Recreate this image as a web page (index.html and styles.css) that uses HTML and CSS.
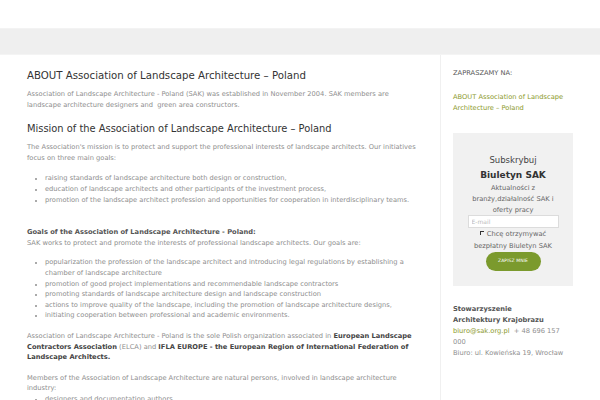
FILE: index.html
```html
<!DOCTYPE html>
<html lang="pl">
<head>
<meta charset="utf-8">
<link rel="stylesheet" href="styles.css">
</head>
<body>
<div class="top"></div>
<div class="band"></div>
<div class="page">
  <main class="content">
    <h1 class="title">ABOUT Association of Landscape Architecture – Poland</h1>
    <p class="para">Association of Landscape Architecture - Poland (SAK) was established in November 2004. SAK members are landscape architecture designers and &nbsp;green area constructors.</p>
    <h2 class="title title-2">Mission of the Association of Landscape Architecture – Poland</h2>
    <p class="para">The Association's mission is to protect and support the professional interests of landscape architects. Our initiatives focus on three main goals:</p>
    <ul class="list">
      <li>raising standards of landscape architecture both design or construction,</li>
      <li>education of landscape architects and other participants of the investment process,</li>
      <li>promotion of the landscape architect profession and opportunities for cooperation in interdisciplinary teams.</li>
    </ul>
    <p class="para goals"><strong>Goals of the Association of Landscape Architecture - Poland:</strong><br>SAK works to protect and promote the interests of professional landscape architects. Our goals are:</p>
    <ul class="list">
      <li>popularization the profession of the landscape architect and introducing legal regulations by establishing a chamber of landscape architecture</li>
      <li>promotion of good project implementations and recommendable landscape contractors</li>
      <li>promoting standards of landscape architecture design and landscape construction</li>
      <li>actions to improve quality of the landscape, including the promotion of landscape architecture designs,</li>
      <li>initiating cooperation between professional and academic environments.</li>
    </ul>
    <p class="para">Association of Landscape Architecture - Poland is the sole Polish organization associated in <strong>European Landscape Contractors Association</strong> (ELCA) and <strong>IFLA EUROPE - the European Region of International Federation of Landscape Architects.</strong></p>
    <p class="para">Members of the Association of Landscape Architecture are natural persons, involved in landscape architecture industry:</p>
    <ul class="list list-tight">
      <li>designers and documentation authors</li>
    </ul>
  </main>
  <aside class="sidebar">
    <div class="widget-title">ZAPRASZAMY NA:</div>
    <a class="side-link" href="#">ABOUT Association of Landscape Architecture – Poland</a>
    <div class="newsletter">
      <div class="nl-sub">Subskrybuj</div>
      <div class="nl-name">Biuletyn SAK</div>
      <div class="nl-desc">Aktualności z branży,działalność SAK i oferty pracy</div>
      <input class="nl-input" type="text" placeholder="E-mail">
      <label class="nl-check"><span class="box"></span>Chcę otrzymywać bezpłatny Biuletyn SAK</label>
      <button class="nl-btn" type="button">ZAPISZ MNIE</button>
    </div>
    <div class="contact">
      <strong>Stowarzyszenie<br>Architektury Krajobrazu</strong><br>
      <a class="mail" href="#">biuro@sak.org.pl</a> &nbsp;+ 48 696 157 000<br>
      Biuro: ul. Kowieńska 19, Wrocław
    </div>
  </aside>
</div>
</body>
</html>
```
FILE: styles.css
```css
* { box-sizing: border-box; }
html, body { margin: 0; padding: 0; background: #fff; }
body {
  font-family: "DejaVu Sans", Verdana, sans-serif;
  color: #8e8e8e;
  font-size: 6.7px;
  line-height: 10.6px;
  overflow: hidden;
  height: 400px;
}
.top { height: 28px; background: #fff; }
.band {
  height: 27px;
  background: #efefef;
  border-top: 1px solid #f3f3f3;
  border-bottom: 1px solid #f4f4f4;
}
.page {
  display: grid;
  grid-template-columns: 440px 160px;
}
.content { padding: 13px 22px 0 27px; }
.title {
  margin: 0;
  font-size: 10.2px;
  line-height: 16px;
  font-weight: normal;
  color: #333;
}
.para { margin: 0; }
.title + .para { margin-top: 5px; }
.para + .title-2 { margin-top: 11px; font-size: 9.9px; }
.title-2 + .para { margin-top: 5px; }
.list {
  margin: 10px 0 0;
  padding-left: 18px;
  list-style: disc;
  line-height: 10.6px;
}
.list li::marker { font-size: 5px; }
.list + .para { margin-top: 10px; }
.para + .para { margin-top: 10px; }
.list + .goals { margin-top: 22px; }
.goals + .list { margin-top: 9px; }
.goals strong { color: #555; }
.para + .list-tight { margin-top: 0; }
strong { color: #444; font-weight: bold; }
.sidebar {
  border-left: 1px solid #f0f0f0;
  padding: 13px 27px 0 12px;
}
.widget-title { color: #555; line-height: 11px; }
.side-link {
  display: block;
  margin-top: 13px;
  color: #8c9a2c;
  text-decoration: none;
  line-height: 11px;
}
.newsletter {
  margin-top: 19px;
  width: 120px;
  background: #f1f1f1;
  padding: 20px 12px 15px;
  display: flex;
  flex-direction: column;
  align-items: center;
  text-align: center;
}
.nl-sub { font-size: 8.5px; color: #444; line-height: 14px; }
.nl-name { font-size: 9px; font-weight: bold; color: #333; line-height: 16px; }
.nl-desc { color: #666; line-height: 11px; padding: 0 4px; }
.nl-input {
  margin-top: -1px;
  width: 91px;
  height: 13px;
  border: 1px solid #dcdcdc;
  background: #fff;
  font: inherit;
  font-size: 6px;
  padding: 0 3px;
  color: #bbb;
}
.nl-input::placeholder { color: #bbb; }
.nl-check { color: #666; line-height: 12px; margin-top: 0; padding: 0 4px; }
.box {
  display: inline-block;
  width: 4px; height: 4px;
  border-left: 1px solid #333;
  border-top: 1px solid #333;
  margin-right: 3px;
  vertical-align: 1px;
}
.nl-btn {
  margin-top: 0;
  width: 55px;
  height: 19px;
  border: 0;
  border-radius: 10px;
  background: #7b9a2d;
  color: #fff;
  font: inherit;
  font-size: 4.5px;
  letter-spacing: 0.1px;
}
.contact {
  margin-top: 18px;
  line-height: 11px;
  color: #8e8e8e;
}
.contact strong { color: #555; }
.mail { color: #8c9a2c; text-decoration: none; }
```
